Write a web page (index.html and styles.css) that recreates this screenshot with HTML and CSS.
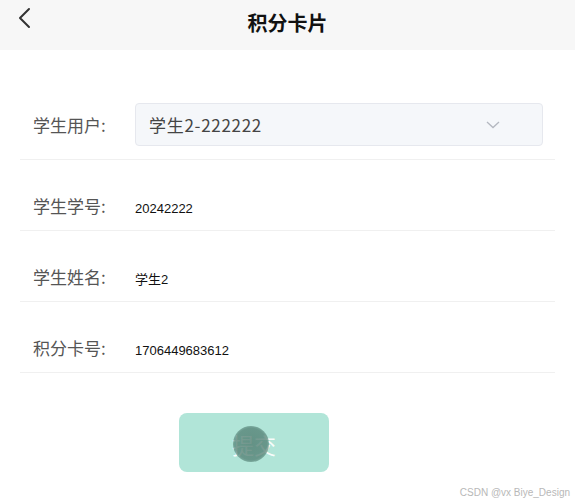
FILE: index.html
```html
<!DOCTYPE html>
<html lang="zh">
<head>
<meta charset="utf-8">
<title>积分卡片</title>
<link rel="stylesheet" href="styles.css">
</head>
<body>
<div class="page">
  <header class="nav">
    <span class="back">
      <svg width="14" height="22" viewBox="0 0 14 22"><path d="M12 2 L3 11 L12 20" fill="none" stroke="#333" stroke-width="2" stroke-linecap="round" stroke-linejoin="round"/></svg>
    </span>
    <h1 class="title">积分卡片</h1>
  </header>
  <form class="form">
    <div class="row row-select">
      <label class="label">学生用户:</label>
      <div class="select">
        <span class="select-text">学生2-222222</span>
        <svg class="select-arrow" width="14" height="8" viewBox="0 0 14 8"><path d="M1 1 L7 6.5 L13 1" fill="none" stroke="#b4b8c0" stroke-width="1.3"/></svg>
      </div>
    </div>
    <div class="row">
      <span class="label">学生学号:</span>
      <span class="value">20242222</span>
    </div>
    <div class="row">
      <span class="label">学生姓名:</span>
      <span class="value">学生2</span>
    </div>
    <div class="row">
      <span class="label">积分卡号:</span>
      <span class="value">1706449683612</span>
    </div>
    <div class="actions">
      <button type="button" class="submit"><span class="submit-text">提交</span><span class="touch"></span></button>
    </div>
  </form>
  <div class="watermark">CSDN @vx Biye_Design</div>
</div>
</body>
</html>
```
FILE: styles.css
```css
html, body {
  margin: 0;
  padding: 0;
  background: #ffffff;
}
body {
  font-family: "Noto Sans CJK SC", "Noto Sans", sans-serif;
  color: #333;
}
.page {
  position: relative;
  width: 575px;
  height: 502px;
  overflow: hidden;
}
.nav {
  height: 50px;
  background: #f7f7f7;
  display: flex;
  align-items: center;
  justify-content: center;
  position: relative;
}
.back {
  position: absolute;
  left: 17px;
  top: 7px;
  display: block;
  line-height: 0;
}
.title {
  margin: 0;
  font-size: 20px;
  font-weight: 700;
  color: #111;
  margin-top: -6px;
}
.form {
  margin: 39px 20px 0 20px;
}
.row {
  display: flex;
  align-items: baseline;
  height: 22px;
  padding: 35px 0 13px 13px;
  border-bottom: 1px solid #f0f0f0;
  line-height: 22px;
}
.row-select {
  height: auto;
  align-items: center;
  padding: 14px 12px 13px 13px;
}
.label {
  width: 102px;
  flex: none;
  font-size: 17px;
  color: #555;
}
.value {
  font-family: "Liberation Sans", "Noto Sans CJK SC", sans-serif;
  font-size: 13px;
  color: #111;
}
.select {
  flex: 1;
  height: 41px;
  border: 1px solid #e6e8ee;
  border-radius: 4px;
  background: #f5f7fa;
  display: flex;
  align-items: center;
  padding: 0 42px 0 13px;
}
.select-text {
  flex: 1;
  font-size: 17px;
  letter-spacing: 0.7px;
  color: #444;
}
.select-arrow {
  display: block;
}
.actions {
  display: flex;
  padding: 40px 0 0 159px;
}
.submit {
  position: relative;
  width: 150px;
  height: 59px;
  border: none;
  border-radius: 8px;
  background: #b1e5d8;
  font-family: "Noto Sans CJK SC", sans-serif;
  padding: 0;
  display: flex;
  align-items: center;
  justify-content: center;
}
.submit-text {
  font-size: 22px;
  color: rgba(255,255,255,0.92);
  margin-top: 2px;
}
.touch {
  position: absolute;
  left: 54px;
  top: 13px;
  width: 36px;
  height: 36px;
  border-radius: 50%;
  background: radial-gradient(circle, rgba(80,125,113,0.8) 0%, rgba(80,125,113,0.75) 62%, rgba(80,125,113,0) 100%);
}
.watermark {
  position: absolute;
  right: 5px;
  bottom: 4px;
  font-family: "Liberation Sans", sans-serif;
  font-size: 10px;
  color: #b8b8b8;
}
```
